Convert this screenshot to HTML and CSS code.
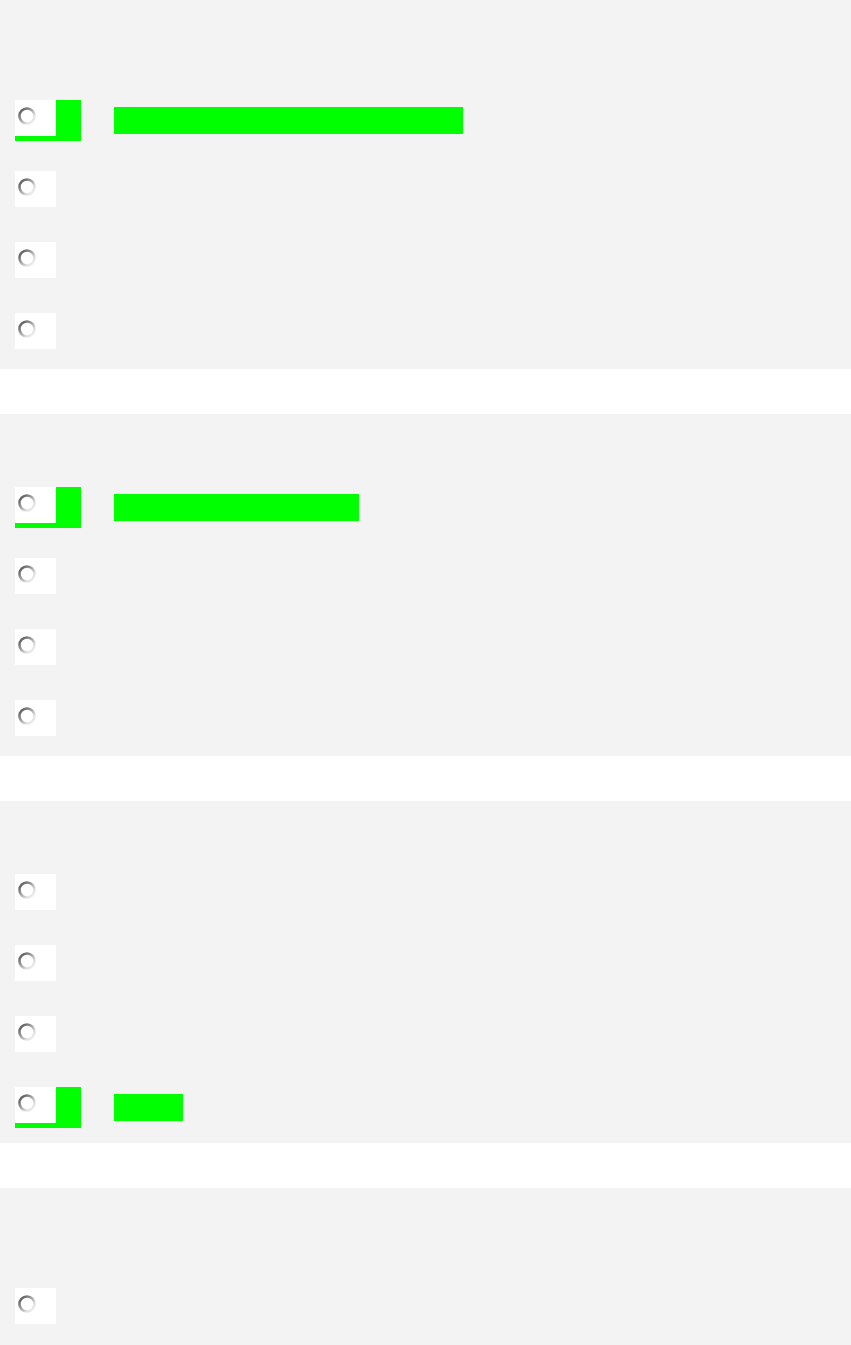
FILE: index.html
```html
<!DOCTYPE html>
<html lang="en">
  <head>
    <meta charset="UTF-8" />
    <meta name="viewport" content="width=device-width, initial-scale=1.0" />
    <title>Quiz</title>
    <link rel="stylesheet" href="styles.css">
  </head>
  <body>
    <svg width="0" height="0" class="defs">
      <defs>
        <linearGradient id="ring" x1="0" y1="0.1" x2="0.9" y2="1">
          <stop offset="0" stop-color="#555" />
          <stop offset="0.4" stop-color="#9a9a9a" />
          <stop offset="0.75" stop-color="#e0e0e0" />
          <stop offset="1" stop-color="#f2f2f2" />
        </linearGradient>
        <symbol id="radio" viewBox="0 0 18 18">
          <circle cx="9" cy="9" r="7.5" fill="#fff" stroke="url(#ring)" stroke-width="2.6" />
        </symbol>
      </defs>
    </svg>

    <div class="question question-titled">
      <div class="option selected">
        <div class="choice"><svg class="radio"><use href="#radio" /></svg></div>
        <span class="answer" style="width: 349px"></span>
      </div>
      <div class="option">
        <div class="choice"><svg class="radio"><use href="#radio" /></svg></div>
      </div>
      <div class="option">
        <div class="choice"><svg class="radio"><use href="#radio" /></svg></div>
      </div>
      <div class="option">
        <div class="choice"><svg class="radio"><use href="#radio" /></svg></div>
      </div>
    </div>

    <div class="question">
      <div class="option selected">
        <div class="choice"><svg class="radio"><use href="#radio" /></svg></div>
        <span class="answer" style="width: 245px"></span>
      </div>
      <div class="option">
        <div class="choice"><svg class="radio"><use href="#radio" /></svg></div>
      </div>
      <div class="option">
        <div class="choice"><svg class="radio"><use href="#radio" /></svg></div>
      </div>
      <div class="option">
        <div class="choice"><svg class="radio"><use href="#radio" /></svg></div>
      </div>
    </div>

    <div class="question">
      <div class="option">
        <div class="choice"><svg class="radio"><use href="#radio" /></svg></div>
      </div>
      <div class="option">
        <div class="choice"><svg class="radio"><use href="#radio" /></svg></div>
      </div>
      <div class="option">
        <div class="choice"><svg class="radio"><use href="#radio" /></svg></div>
      </div>
      <div class="option selected">
        <div class="choice"><svg class="radio"><use href="#radio" /></svg></div>
        <span class="answer" style="width: 69px"></span>
      </div>
    </div>

    <div class="question question-titled last">
      <div class="option">
        <div class="choice"><svg class="radio"><use href="#radio" /></svg></div>
      </div>
    </div>
  </body>
</html>
```

FILE: styles.css
```css
body {
  margin: 0;
  background-color: white;
  font-family: "Liberation Sans", Arial, sans-serif;
}
.defs {
  position: absolute;
}
.question {
  background-color: #f3f3f3;
  padding: 73px 15px 20px;
  margin-bottom: 45px;
  display: flex;
  flex-direction: column;
  gap: 35px;
}
.question-titled {
  padding-top: 100px;
}
.question.last {
  margin-bottom: 0;
  padding-bottom: 21px;
}
.option {
  display: flex;
  align-items: flex-start;
  height: 36px;
}
.choice {
  width: 41px;
  height: 36px;
  background-color: white;
  padding: 7px 0 0 3px;
  box-sizing: border-box;
  flex-shrink: 0;
}
.selected .choice {
  box-sizing: content-box;
  width: 38px;
  height: 29px;
  border-right: 25px solid #00ff00;
  border-bottom: 5px solid #00ff00;
  margin-right: -25px;
  margin-bottom: -5px;
}
.radio {
  display: block;
  width: 18px;
  height: 18px;
}
.answer {
  display: block;
  height: 27px;
  margin: 7px 0 0 58px;
  background-color: #00ff00;
}
```
